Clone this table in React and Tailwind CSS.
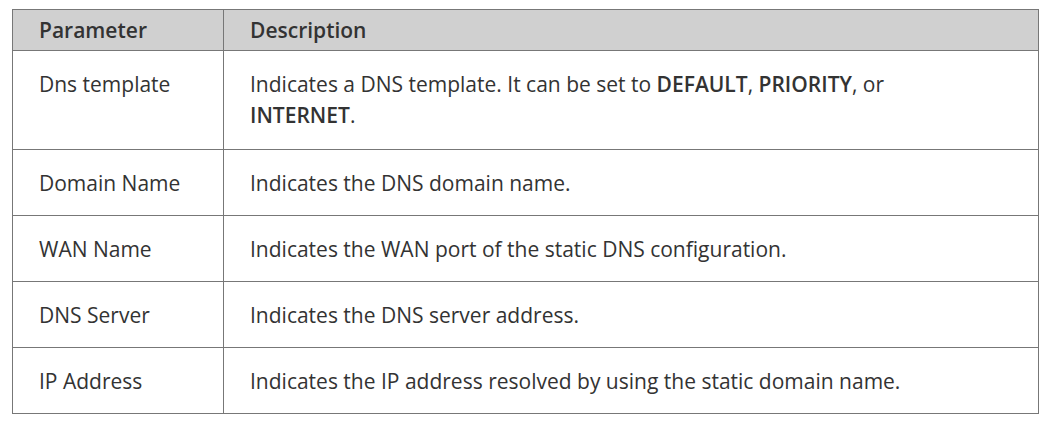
const rows = [
  {
    name: 'Dns template',
    tall: true,
    desc: (
      <>
        Indicates a DNS template. It can be set to <b className="font-semibold">DEFAULT</b>,{' '}
        <b className="font-semibold">PRIORITY</b>, or <b className="font-semibold">INTERNET</b>.
      </>
    ),
  },
  { name: 'Domain Name', desc: 'Indicates the DNS domain name.' },
  { name: 'WAN Name', desc: 'Indicates the WAN port of the static DNS configuration.' },
  { name: 'DNS Server', desc: 'Indicates the DNS server address.' },
  { name: 'IP Address', desc: 'Indicates the IP address resolved by using the static domain name.' },
];

export default function App() {
  return (
    <div className="bg-white w-[1052px] h-[422px] pt-[9px] pl-[12px] font-['Open_Sans',sans-serif] text-[#333]">
      <table className="border-collapse w-[1027px] table-fixed">
        <colgroup>
          <col className="w-[211px]" />
          <col />
        </colgroup>
        <thead>
          <tr className="bg-[#d0d0d0] h-[41px]">
            <th className="border border-[#777] text-left font-semibold text-[21px] leading-[31px] px-[26px] py-0">
              Parameter
            </th>
            <th className="border border-[#777] text-left font-semibold text-[21px] leading-[31px] px-[26px] py-0">
              Description
            </th>
          </tr>
        </thead>
        <tbody>
          {rows.map((r) => (
            <tr key={r.name} className="h-[65px]">
              <td
                className={`border border-[#777] align-top text-[21px] leading-[31px] px-[26px] pt-[18px] ${
                  r.tall ? 'pb-[18px]' : 'pb-[16px]'
                }`}
              >
                {r.name}
              </td>
              <td
                className={`border border-[#777] align-top text-[21px] leading-[31px] pl-[26px] pr-[110px] pt-[18px] ${
                  r.tall ? 'pb-[18px]' : 'pb-[16px]'
                }`}
              >
                {r.desc}
              </td>
            </tr>
          ))}
        </tbody>
      </table>
    </div>
  );
}
